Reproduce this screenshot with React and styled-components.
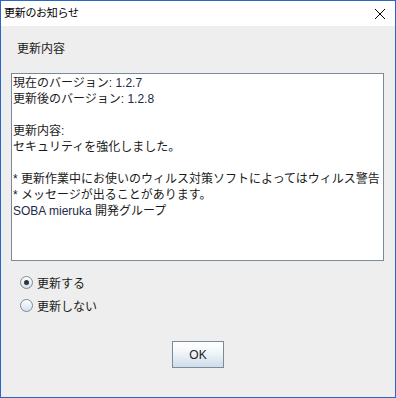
import styled, { createGlobalStyle } from 'styled-components';

const GlobalStyle = createGlobalStyle`
  html, body {
    margin: 0;
    padding: 0;
    background: #fff;
  }
  body {
    font-family: "Liberation Sans", "Noto Sans CJK JP", sans-serif;
    color: #1a1a1a;
  }
`;

const Window = styled.div`
  width: 396px;
  height: 398px;
  box-sizing: border-box;
  border: 1px solid #2a66c6;
  background: #eeeeee;
  display: flex;
  flex-direction: column;
`;

const TitleBar = styled.div`
  height: 25px;
  background: #ffffff;
  display: flex;
  align-items: center;
  justify-content: space-between;
  padding: 0 8px 0 3px;
  flex-shrink: 0;
`;

const Title = styled.span`
  font-size: 11px;
  letter-spacing: -0.3px;
  line-height: 25px;
  color: #000;
`;

const CloseButton = styled.div`
  width: 14px;
  height: 14px;
  display: flex;
  align-items: center;
  justify-content: center;
`;

const Body = styled.div`
  flex: 1;
  display: flex;
  flex-direction: column;
  padding: 15px 11px 0 10px;
`;

const Label = styled.div`
  font-size: 12px;
  line-height: 16px;
  margin-left: 6px;
`;

const TextBox = styled.div`
  margin-top: 16px;
  height: 188px;
  box-sizing: border-box;
  border: 1px solid #7a8a99;
  background: #ffffff;
  padding: 1px 1px;
  font-size: 12px;
  line-height: 16px;
  white-space: pre;
  overflow: hidden;
`;

const Line = styled.div`
  height: 16px;
`;

const Latin = styled.span`
  color: #1c2a4a;
`;

const RadioGroup = styled.div`
  margin-top: 10px;
  margin-left: 9px;
  display: flex;
  flex-direction: column;
`;

const RadioRow = styled.label`
  display: flex;
  align-items: center;
  height: 23px;
  gap: 4px;
  font-size: 12px;
`;

const RadioCircle = styled.span`
  width: 13px;
  height: 13px;
  box-sizing: border-box;
  border-radius: 50%;
  border: 1px solid #7a8a99;
  background: linear-gradient(#ffffff, #d3e0ee);
  display: flex;
  align-items: center;
  justify-content: center;
  &::after {
    content: '';
    display: ${p => (p.checked ? 'block' : 'none')};
    width: 5px;
    height: 5px;
    border-radius: 50%;
    background: #333;
  }
`;

const Footer = styled.div`
  display: flex;
  justify-content: center;
  margin-top: 24px;
  padding-left: 1px;
`;

const Button = styled.button`
  width: 52px;
  height: 27px;
  box-sizing: border-box;
  border: 1px solid #7a8a99;
  background: linear-gradient(#ffffff, #f4f8fb 35%, #cfdcea);
  font-family: "Liberation Sans", Arial, sans-serif;
  font-size: 12px;
  color: #222;
  padding: 0;
`;

const lines = [
  <>現在のバージョン: <Latin>1.2.7</Latin></>,
  <>更新後のバージョン: <Latin>1.2.8</Latin></>,
  '',
  '更新内容:',
  'セキュリティを強化しました。',
  '',
  '* 更新作業中にお使いのウィルス対策ソフトによってはウィルス警告',
  '* メッセージが出ることがあります。',
  <><Latin>SOBA mieruka</Latin> 開発グループ</>,
];

export default function App() {
  return (
    <>
      <GlobalStyle />
      <Window>
        <TitleBar>
          <Title>更新のお知らせ</Title>
          <CloseButton>
            <svg width="12" height="12" viewBox="0 0 12 12">
              <path d="M1 1 L11 11 M11 1 L1 11" stroke="#000" strokeWidth="1" fill="none" />
            </svg>
          </CloseButton>
        </TitleBar>
        <Body>
          <Label>更新内容</Label>
          <TextBox>
            {lines.map((l, i) => (
              <Line key={i}>{l}</Line>
            ))}
          </TextBox>
          <RadioGroup>
            <RadioRow>
              <RadioCircle checked />
              更新する
            </RadioRow>
            <RadioRow>
              <RadioCircle />
              更新しない
            </RadioRow>
          </RadioGroup>
          <Footer>
            <Button>OK</Button>
          </Footer>
        </Body>
      </Window>
    </>
  );
}
